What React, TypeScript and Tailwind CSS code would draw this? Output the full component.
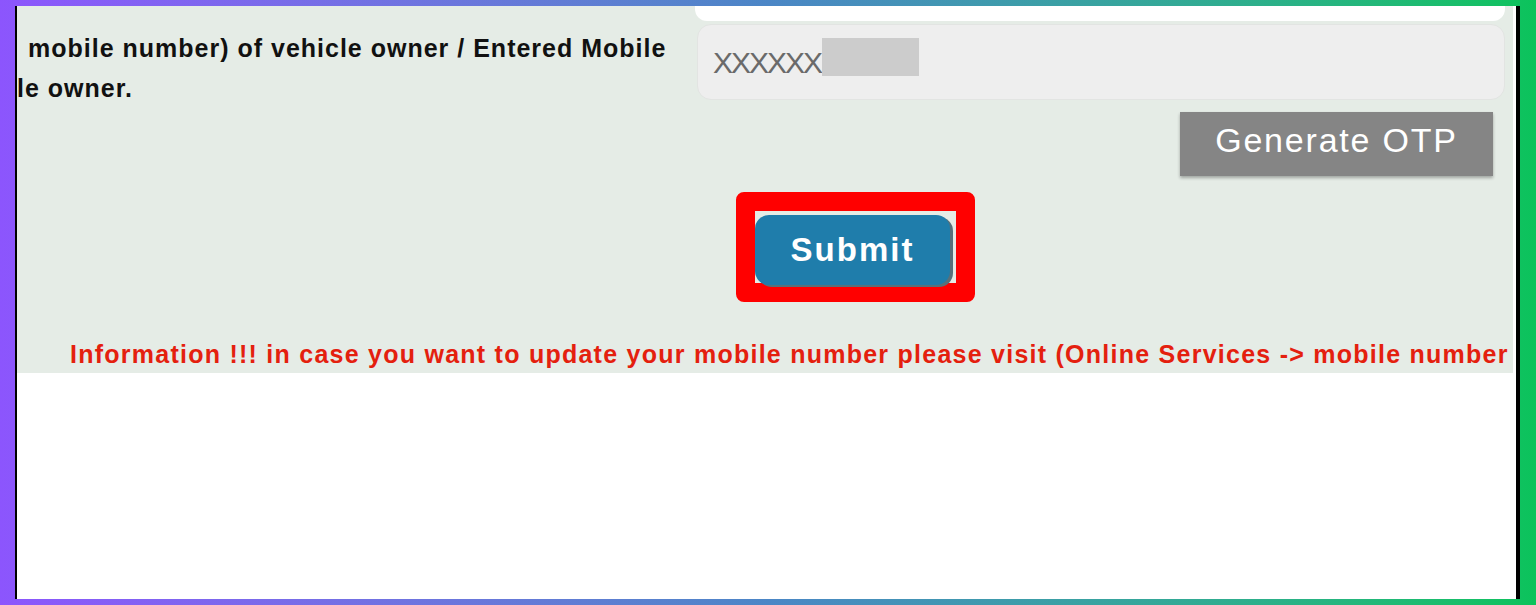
export default function App() {
  return (
    <div className="h-[605px] w-full bg-gradient-to-r from-[#8c55fd] via-[#4b86c6] to-[#0bc35b] pl-[15px] pr-[16px] pt-[6px] pb-[6px] font-['Liberation_Sans',Arial,sans-serif]">
      <div className="h-full bg-white border-l-2 border-r-4 border-black overflow-hidden">
        <section className="bg-[#e5ece6] mr-[3px] pb-[4px] overflow-hidden">
          <div className="flex">
            <div className="w-[680px] shrink-0 pt-[22px] text-[25px] leading-[40px] tracking-[1px] font-bold text-[#111] whitespace-nowrap overflow-hidden">
              <p className="pl-[11px]">mobile number) of vehicle owner / Entered Mobile</p>
              <p>le owner.</p>
            </div>
            <div className="flex flex-col w-[808px]">
              <div className="h-[15px] bg-white rounded-b-[12px] -ml-[2px]"></div>
              <div className="relative mt-[3px] h-[76px] bg-[#eeeeee] border border-[#e2e4e2] rounded-[14px] flex items-center pl-[15px]">
                <span className="text-[30px] text-[#6a6a6a] tracking-[-2px]">XXXXXX</span>
                <div className="absolute left-[124px] top-[13px] w-[97px] h-[38px] bg-[#cccccc]"></div>
              </div>
              <button className="self-end mr-[12px] mt-[12px] w-[313px] h-[64px] pb-[8px] bg-[#858585] text-white text-[34px] tracking-[1.8px] shadow-[0_2px_3px_rgba(0,0,0,0.3)]">
                Generate OTP
              </button>
            </div>
          </div>

          <div className="ml-[719px] mt-[16px] w-[239px] h-[110px] border-[19px] border-[#ff0000] rounded-[8px]">
            <button className="mt-[4px] w-[195px] h-[70px] bg-[#1f7dab] rounded-[14px] text-white text-[33px] font-bold tracking-[2px] shadow-[3px_2px_0_#58707a]">
              Submit
            </button>
          </div>

          <p className="mt-[37px] pl-[53px] text-[25px] leading-[30px] tracking-[1.25px] font-bold text-[#e4200e] whitespace-nowrap overflow-hidden">
            Information !!! in case you want to update your mobile number please visit (Online Services -&gt; mobile number
          </p>
        </section>
      </div>
    </div>
  );
}
